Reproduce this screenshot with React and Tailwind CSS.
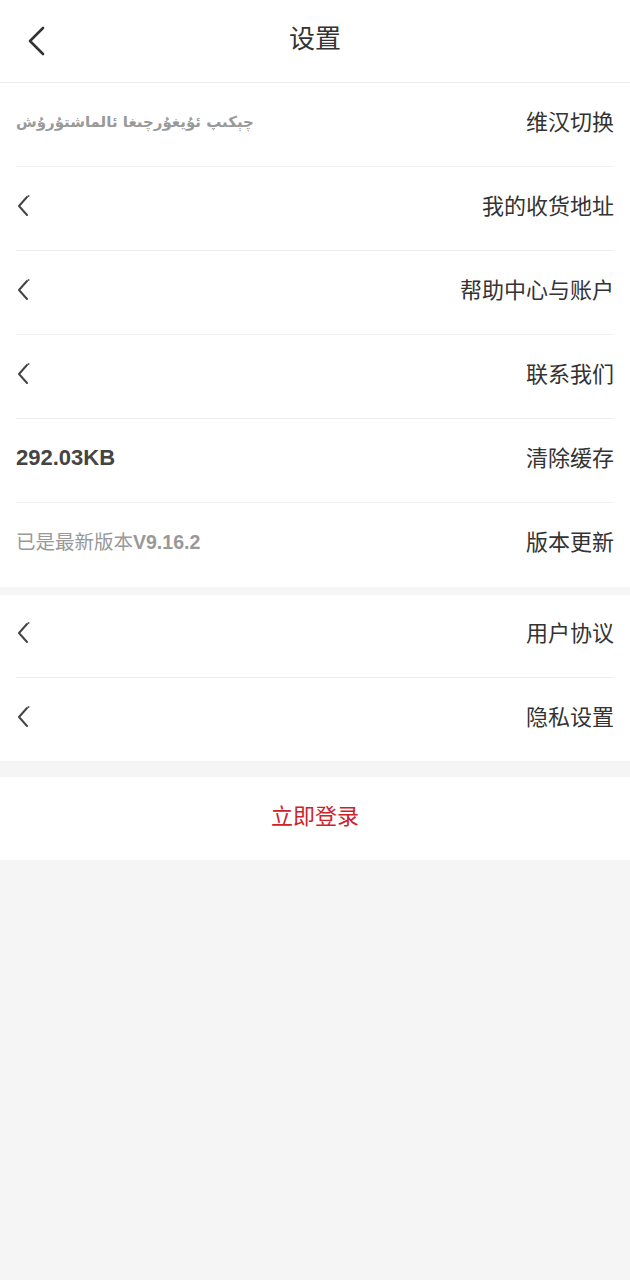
import React from 'react';

const cjk = { fontFamily: '"Noto Sans CJK SC", "Liberation Sans", sans-serif' };

const Chevron = () => (
  <svg width="14" height="24" viewBox="0 0 14 24" fill="none" className="shrink-0">
    <path d="M11 3 L3 12 L11 21" stroke="#444" strokeWidth="2" strokeLinecap="round" strokeLinejoin="round" />
    <circle cx="12.5" cy="2" r="1" fill="#555" />
  </svg>
);

const Row = ({ left, label, h }) => (
  <div className={`mx-4 flex items-center justify-between pb-[6px] border-b last:border-b-0 border-[#f0f0f0] ${h}`}>
    <div className="flex items-center">{left}</div>
    <span className="text-[22px] leading-none text-[#333] -translate-y-[2px]" style={cjk}>{label}</span>
  </div>
);

export default function App() {
  const group1 = [
    {
      label: '维汉切换',
      left: (
        <span dir="rtl" className="text-[15px] leading-none font-bold text-[#999] translate-y-[1px]" style={{ fontFamily: '"DejaVu Sans", sans-serif' }}>
          چېكىپ ئۇيغۇرچىغا ئالماشتۇرۇش
        </span>
      ),
    },
    { label: '我的收货地址', left: <Chevron /> },
    { label: '帮助中心与账户', left: <Chevron /> },
    { label: '联系我们', left: <Chevron /> },
    {
      label: '清除缓存',
      left: <span className="text-[22px] leading-none font-bold text-[#444]" style={{ fontFamily: '"Liberation Sans", sans-serif' }}>292.03KB</span>,
    },
    {
      label: '版本更新',
      left: (
        <span className="text-[19.5px] leading-none text-[#999]" style={cjk}>
          已是最新版本<span className="font-bold" style={{ fontFamily: '"Liberation Sans", sans-serif' }}>V9.16.2</span>
        </span>
      ),
    },
  ];
  const group2 = [
    { label: '用户协议', left: <Chevron /> },
    { label: '隐私设置', left: <Chevron /> },
  ];

  return (
    <div className="w-[630px] min-h-[1280px] bg-[#f5f5f5]" style={cjk}>
      <div className="bg-white h-[83px] flex items-center justify-center relative pb-[8px] border-b border-[#f0f0f0]">
        <svg width="20" height="32" viewBox="0 0 20 32" fill="none" className="absolute left-[27px] top-[25px]">
          <path d="M16 3 L3 16 L16 29" stroke="#333" strokeWidth="2.6" strokeLinecap="round" strokeLinejoin="round" />
        </svg>
        <span className="text-[26px] leading-none text-[#333]">设置</span>
      </div>
      <div className="bg-white">
        {group1.map((r) => (
          <Row key={r.label} {...r} h="h-[84px]" />
        ))}
      </div>
      <div className="bg-white mt-[8px]">
        {group2.map((r) => (
          <Row key={r.label} {...r} h="h-[83px]" />
        ))}
      </div>
      <div className="bg-white mt-[16px] h-[83px] flex items-center justify-center pb-[6px]">
        <span className="text-[22px] leading-none text-[#cc2229] -translate-y-[2px]">立即登录</span>
      </div>
    </div>
  );
}
